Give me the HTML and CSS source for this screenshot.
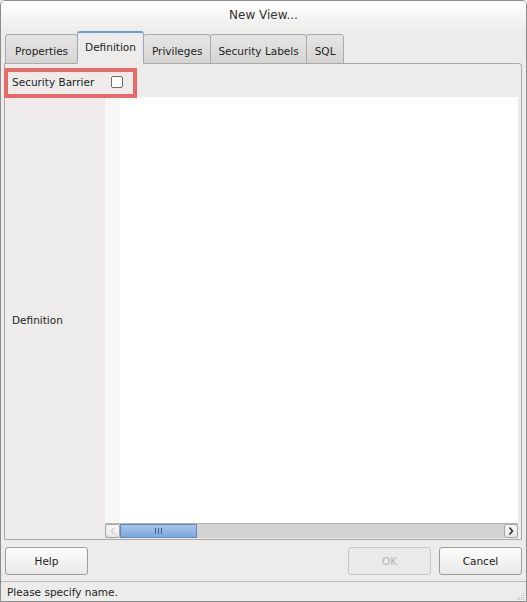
FILE: index.html
```html
<!DOCTYPE html>
<html>
<head>
<meta charset="utf-8">
<link rel="stylesheet" href="styles.css">
</head>
<body>
<div class="window">
  <div class="titlebar">New View...</div>
  <div class="tabs">
    <div class="tab first">Properties</div>
    <div class="tab active">Definition</div>
    <div class="tab">Privileges</div>
    <div class="tab labels">Security Labels</div>
    <div class="tab">SQL</div>
  </div>
  <div class="pane">
    <div class="barrier-row">
      <span class="barrier-label">Security Barrier</span>
      <span class="checkbox"></span>
      <div class="highlight"></div>
    </div>
    <div class="def-row">
      <div class="def-label">Definition</div>
      <div class="editor">
        <div class="editor-body">
          <div class="gutter"></div>
          <div class="text-area"></div>
        </div>
        <div class="hscroll">
          <div class="sb-btn left"><svg width="6" height="8" viewBox="0 0 6 8"><path d="M4.5 0.5 L1.5 4 L4.5 7.5" fill="none" stroke="#b8b8b8" stroke-width="1"/></svg></div>
          <div class="thumb"><span class="grip"></span><span class="grip"></span><span class="grip"></span></div>
          <div class="track"></div>
          <div class="sb-btn right"><svg width="6" height="8" viewBox="0 0 6 8"><path d="M1.5 0.5 L4.5 4 L1.5 7.5" fill="none" stroke="#222" stroke-width="1.4"/></svg></div>
        </div>
      </div>
    </div>
  </div>
  <div class="buttons">
    <button class="btn help">Help</button>
    <div class="spacer"></div>
    <button class="btn ok" disabled>OK</button>
    <button class="btn cancel">Cancel</button>
  </div>
  <div class="status">
    <span>Please specify name.</span>
    <svg class="grip-corner" width="10" height="10" viewBox="0 0 10 10">
      <g fill="#b0b0b0">
        <rect x="8" y="2" width="1" height="1"/>
        <rect x="6" y="4" width="1" height="1"/><rect x="8" y="4" width="1" height="1"/>
        <rect x="4" y="6" width="1" height="1"/><rect x="6" y="6" width="1" height="1"/><rect x="8" y="6" width="1" height="1"/>
        <rect x="2" y="8" width="1" height="1"/><rect x="4" y="8" width="1" height="1"/><rect x="6" y="8" width="1" height="1"/><rect x="8" y="8" width="1" height="1"/>
      </g>
    </svg>
  </div>
</div>
</body>
</html>
```
FILE: styles.css
```css
* { box-sizing: border-box; }
html, body { margin: 0; padding: 0; }
body {
  width: 527px;
  height: 602px;
  background: #edeceb;
  font-family: "DejaVu Sans", sans-serif;
  font-size: 10.5px;
  color: #222;
}
.window {
  width: 527px;
  height: 602px;
  border: 1px solid #8c8c8c;
  border-radius: 5px 5px 0 0;
  background: #edeceb;
  display: flex;
  flex-direction: column;
  overflow: hidden;
}
.titlebar {
  height: 30px;
  flex: none;
  display: flex;
  align-items: center;
  justify-content: center;
  background: linear-gradient(#ffffff, #edeceb);
  font-size: 12px;
  color: #333;
  padding-bottom: 2px;
}
.tabs {
  display: flex;
  align-items: flex-end;
  height: 33px;
  flex: none;
  padding-left: 4px;
  margin-bottom: -1px;
  position: relative;
  z-index: 1;
}
.tab {
  height: 30px;
  padding: 3px 8px 0;
  display: flex;
  align-items: center;
  border: 1px solid #a9a9a9;
  border-radius: 3px 3px 0 0;
  background: linear-gradient(#e6e5e4, #d6d5d4);
  color: #222;
  margin-right: -1px;
}
.tab.first { padding: 3px 9px 0; }
.tab.labels { padding: 3px 7px 0; }
.tab.active {
  height: 33px;
  background: #edeceb;
  border-color: #9aa6b6;
  border-top: 2px solid #6f9bd3;
  border-bottom: 1px solid #edeceb;
  padding: 0 7px 3px;
  position: relative;
  z-index: 2;
}
.pane {
  margin: 0 4px 0 3px;
  height: 477px;
  flex: none;
  border: 1px solid #a9a9a9;
  border-radius: 0 3px 0 0;
  display: flex;
  flex-direction: column;
  padding: 0 3px 1px 1px;
}
.barrier-row {
  height: 33px;
  flex: none;
  display: flex;
  align-items: center;
  padding-left: 6px;
  padding-top: 3px;
  position: relative;
}
.barrier-label { width: 99px; }
.checkbox {
  width: 12px;
  height: 12px;
  border: 1px solid #6c6c6c;
  border-radius: 2px;
  background: #fff;
}
.highlight {
  position: absolute;
  left: -2px;
  top: 4px;
  width: 133px;
  height: 30px;
  border: 4px solid #e8696a;
}
.def-row {
  flex: 1;
  display: flex;
  min-height: 0;
}
.def-label {
  width: 99px;
  flex: none;
  display: flex;
  align-items: center;
  padding-left: 6px;
  padding-top: 5px;
}
.editor {
  flex: 1;
  display: flex;
  flex-direction: column;
}
.editor-body {
  flex: 1;
  display: flex;
}
.gutter {
  width: 15px;
  background-color: #fafafa;
  background-image: repeating-conic-gradient(#f3f3f3 0 25%, #fbfbfb 0 50%);
  background-size: 2px 2px;
}
.text-area { flex: 1; background: #fff; }
.hscroll {
  height: 15px;
  flex: none;
  display: flex;
  background: #d2d2d2;
  border-top: 1px solid #b4b4b4;
}
.sb-btn {
  width: 15px;
  display: flex;
  align-items: center;
  justify-content: center;
  background: linear-gradient(#fbfbfb, #e6e6e6);
  border: 1px solid #a5a5a5;
  border-radius: 3px;
}
.sb-btn.right { width: 14px; }
.thumb {
  width: 77px;
  background: linear-gradient(#a8c5ec, #7fa6da);
  border: 1px solid #6386bb;
  display: flex;
  align-items: center;
  justify-content: center;
  gap: 2px;
}
.grip { width: 1px; height: 6px; background: #3f5f8f; }
.track { flex: 1; }
.buttons {
  display: flex;
  padding: 7px 4px 0 4px;
  height: 41px;
  flex: none;
}
.spacer { flex: 1; }
.btn {
  width: 83px;
  height: 28px;
  font-family: "DejaVu Sans", sans-serif;
  font-size: 10.5px;
  color: #222;
  border: 1px solid #9c9c9c;
  border-radius: 3px;
  background: linear-gradient(#fdfdfd, #e9e9e9);
  padding: 0;
}
.btn.ok {
  color: #b5b5b5;
  border-color: #c7c7c7;
  background: #ebeaea;
  margin-right: 8px;
}
.status {
  flex: 1;
  border-top: 1px solid #b8b8b8;
  display: flex;
  align-items: center;
  justify-content: space-between;
  padding: 0 1px 0 6px;
  position: relative;
}
.grip-corner { align-self: flex-end; }
```
